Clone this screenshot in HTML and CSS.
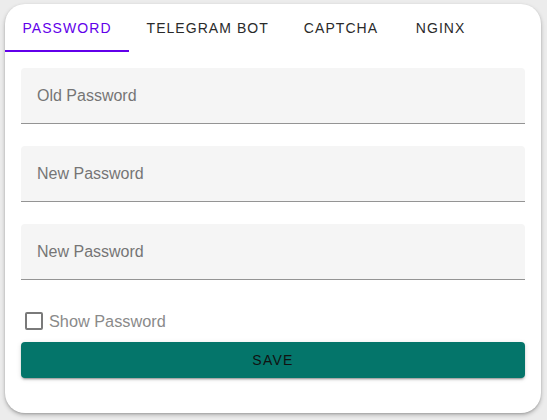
FILE: index.html
```html
<!DOCTYPE html>
<html>
<head>
<meta charset="utf-8">
<link rel="stylesheet" href="styles.css">
</head>
<body>
<div class="card">
  <div class="tabs">
    <div class="tab active">Password</div>
    <div class="tab">Telegram Bot</div>
    <div class="tab">Captcha</div>
    <div class="tab">Nginx</div>
  </div>
  <div class="form">
    <div class="field"><span class="label">Old Password</span></div>
    <div class="field"><span class="label">New Password</span></div>
    <div class="field"><span class="label">New Password</span></div>
    <label class="check"><span class="box"></span><span>Show Password</span></label>
    <button class="save">Save</button>
  </div>
</div>
</body>
</html>
```
FILE: styles.css
```css
html, body {
  margin: 0;
  padding: 0;
  background: #ececec;
  font-family: "Liberation Sans", Arial, sans-serif;
}
body {
  padding: 4px 6px 6px 5px;
}
.card {
  background: #fff;
  border-radius: 20px;
  height: 409px;
  box-shadow: 0 2px 4px rgba(0,0,0,0.25), 0 1px 2px rgba(0,0,0,0.12);
  overflow: hidden;
}
.tabs {
  display: flex;
  height: 48px;
}
.tab {
  display: flex;
  align-items: center;
  justify-content: center;
  padding: 2px 17.5px 0;
  min-width: 90px;
  font-size: 14px;
  text-transform: uppercase;
  letter-spacing: 1.05px;
  color: #2a2a2a;
  border-bottom: 2px solid transparent;
  box-sizing: border-box;
}
.tab.active {
  color: #6200ea;
  border-bottom-color: #6200ea;
}
.form {
  padding: 16px 16px 0 16px;
  display: flex;
  flex-direction: column;
}
.field {
  height: 56px;
  background: #f5f5f5;
  border-radius: 4px 4px 0 0;
  border-bottom: 1px solid #949494;
  box-sizing: border-box;
  display: flex;
  align-items: center;
  padding-left: 16px;
  margin-bottom: 22px;
}
.label {
  font-size: 16px;
  color: #757575;
}
.check {
  display: flex;
  align-items: center;
  gap: 6px;
  margin-top: 9px;
  padding-left: 4px;
  font-size: 16.3px;
  color: #8a8a8a;
  height: 20px;
}
.box {
  width: 14px;
  height: 14px;
  border: 2px solid #7a7a7a;
  border-radius: 2px;
}
.save {
  margin-top: 11px;
  height: 36px;
  border: none;
  border-radius: 4px;
  background: #04756a;
  color: #111;
  font-family: "Liberation Sans", Arial, sans-serif;
  font-size: 14px;
  letter-spacing: 1.25px;
  text-transform: uppercase;
  box-shadow: 0 3px 1px -2px rgba(0,0,0,.2), 0 2px 2px 0 rgba(0,0,0,.14), 0 1px 5px 0 rgba(0,0,0,.12);
}
```
